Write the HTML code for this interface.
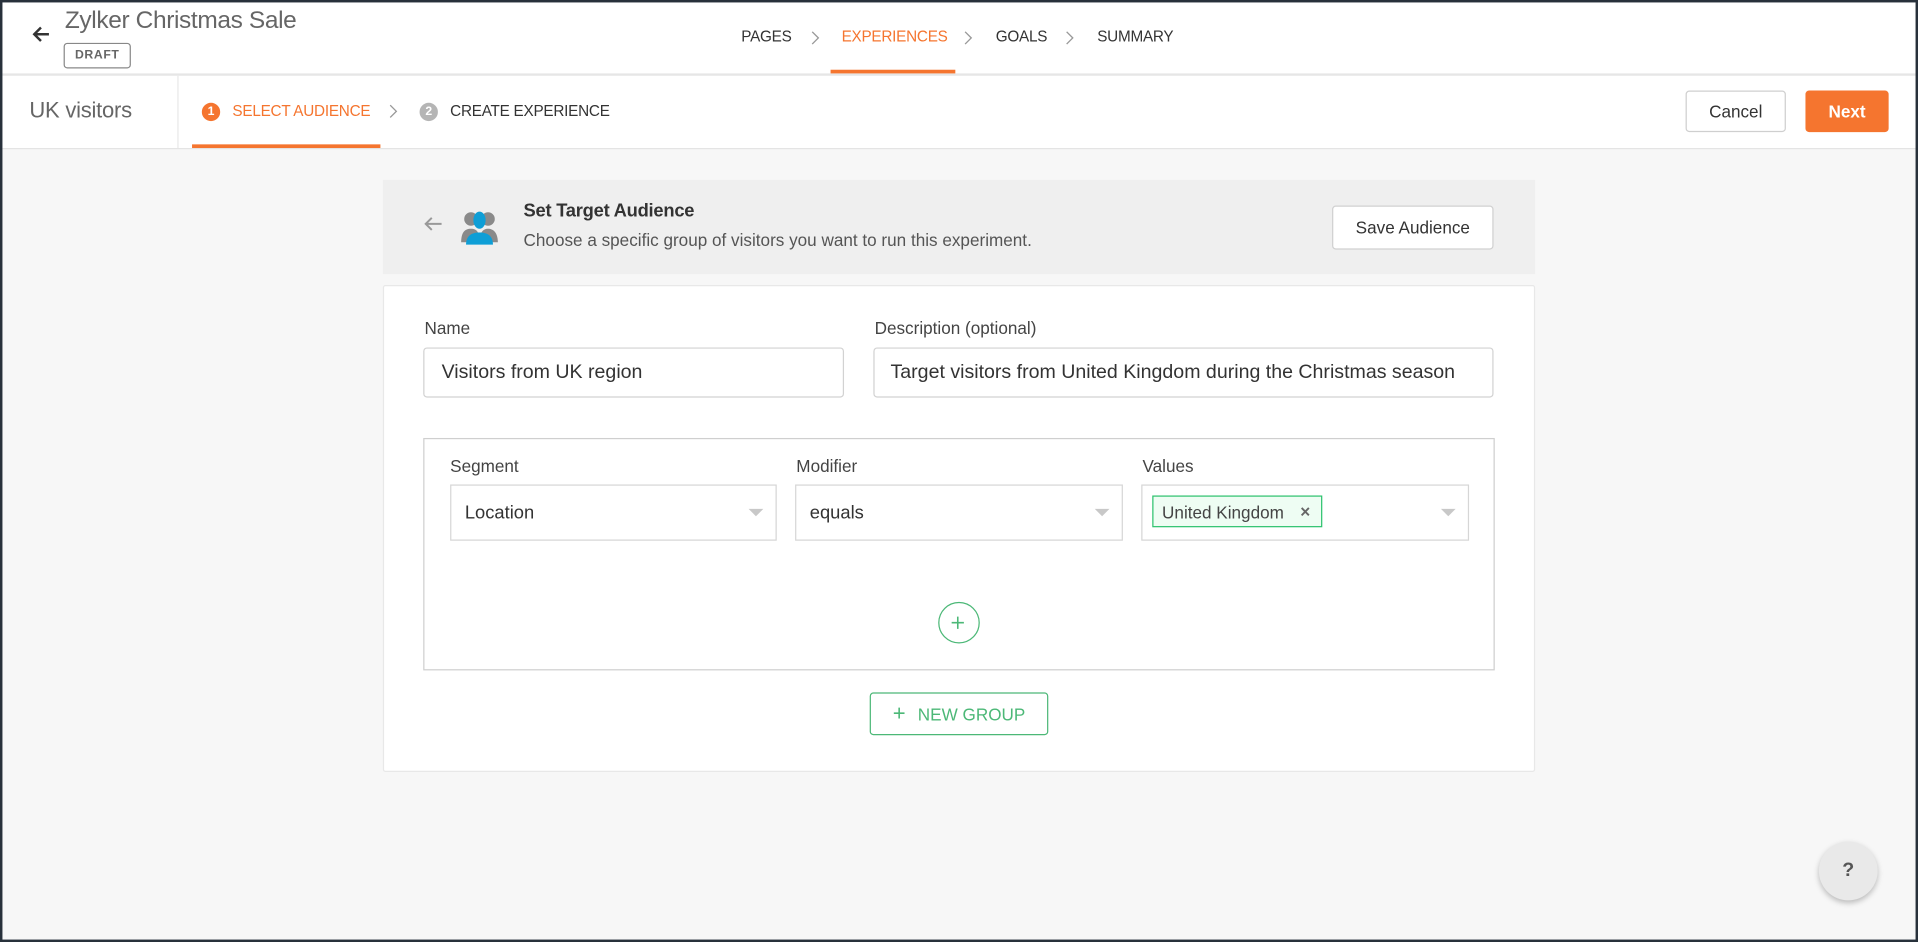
<!DOCTYPE html>
<html><head><meta charset="utf-8"><style>
html,body{margin:0;padding:0;width:1918px;height:942px;overflow:hidden;background:#28313b;}
#w{position:absolute;left:0;top:0;width:1568px;height:770px;transform:scale(1.22321,1.22338);transform-origin:0 0;font-family:"Liberation Sans",sans-serif;}
#pg{position:absolute;left:2px;top:2px;width:1564px;height:766px;background:#f7f7f7;overflow:hidden;}
.a{position:absolute;}
.t{position:absolute;white-space:nowrap;}
.btn{position:absolute;box-sizing:border-box;border-radius:3px;display:flex;align-items:center;justify-content:center;font-size:14px;}
.inp{position:absolute;box-sizing:border-box;border:1px solid #d2d2d2;border-radius:3px;background:#fff;}
.sel{position:absolute;box-sizing:border-box;border:1px solid #d6d6d6;background:#fff;height:46px;top:396px;}
.sel span{position:absolute;left:11px;top:14px;font-size:15px;color:#333;}
.car{position:absolute;right:10px;top:19px;width:0;height:0;border-left:6px solid transparent;border-right:6px solid transparent;border-top:6px solid #c8c8c8;}
.lbl{position:absolute;font-size:14px;color:#444;}
.nav{position:absolute;font-size:12.5px;white-space:nowrap;letter-spacing:-0.2px;}
</style></head><body><div id="w"><div id="pg">
<div class="a" style="left:0;top:0;width:1564px;height:58px;background:#fff;border-bottom:2px solid #e6e6e6;"></div>
<svg class="a" style="left:22px;top:16px" width="20" height="20" viewBox="0 0 20 20"><path d="M16 10H4M9.5 4.5L4 10l5.5 5.5" fill="none" stroke="#333" stroke-width="2"/></svg>
<div class="t" style="left:51px;top:4px;font-size:20px;color:#666;letter-spacing:-0.3px;">Zylker Christmas Sale</div>
<div class="a" style="left:50px;top:33px;width:53px;height:19px;border:1px solid #888;border-radius:3px;font-size:10px;font-weight:bold;color:#666;text-align:center;line-height:19px;letter-spacing:.5px;">DRAFT</div>
<div class="nav" style="left:604px;top:21px;color:#333;">PAGES</div>
<svg class="a" style="left:660px;top:23px" width="8" height="12" viewBox="0 0 8 12"><path d="M2 1l5 5-5 5" fill="none" stroke="#999" stroke-width="1.1"/></svg>
<div class="nav" style="left:686px;top:21px;color:#f5752f;">EXPERIENCES</div>
<div class="a" style="left:677px;top:55px;width:102px;height:3px;background:#f5752f;"></div>
<svg class="a" style="left:785px;top:23px" width="8" height="12" viewBox="0 0 8 12"><path d="M2 1l5 5-5 5" fill="none" stroke="#999" stroke-width="1.1"/></svg>
<div class="nav" style="left:812px;top:21px;color:#333;">GOALS</div>
<svg class="a" style="left:868px;top:23px" width="8" height="12" viewBox="0 0 8 12"><path d="M2 1l5 5-5 5" fill="none" stroke="#999" stroke-width="1.1"/></svg>
<div class="nav" style="left:895px;top:21px;color:#333;">SUMMARY</div>
<div class="a" style="left:0;top:60px;width:1564px;height:59px;background:#fff;border-bottom:1px solid #e4e4e4;"></div>
<div class="a" style="left:143px;top:60px;width:1px;height:59px;background:#e8e8e8;"></div>
<div class="t" style="left:22px;top:78px;font-size:18px;color:#666;letter-spacing:-0.2px;">UK visitors</div>
<div class="a" style="left:163px;top:82px;width:15px;height:15px;border-radius:50%;background:#f5752f;color:#fff;font-size:10px;font-weight:bold;text-align:center;line-height:15px;">1</div>
<div class="nav" style="left:188px;top:82px;color:#f5752f;">SELECT AUDIENCE</div>
<div class="a" style="left:155px;top:116px;width:154px;height:3px;background:#f5752f;"></div>
<svg class="a" style="left:315px;top:83px" width="8" height="12" viewBox="0 0 8 12"><path d="M2 1l5 5-5 5" fill="none" stroke="#999" stroke-width="1.1"/></svg>
<div class="a" style="left:341px;top:82px;width:15px;height:15px;border-radius:50%;background:#b5b5b5;color:#fff;font-size:10px;font-weight:bold;text-align:center;line-height:15px;">2</div>
<div class="nav" style="left:366px;top:82px;color:#333;">CREATE EXPERIENCE</div>
<div class="btn" style="left:1376px;top:72px;width:82px;height:34px;border:1px solid #cfcfcf;background:#fff;color:#333;">Cancel</div>
<div class="btn" style="left:1474px;top:72px;width:68px;height:34px;background:#f5752f;color:#fff;font-weight:bold;">Next</div>
<div class="a" style="left:311px;top:145px;width:942px;height:77px;background:#efefef;"></div>
<svg class="a" style="left:343px;top:173px" width="18" height="16" viewBox="0 0 18 16"><path d="M16 8H3M8 3L3 8l5 5" fill="none" stroke="#999" stroke-width="1.6"/></svg>
<svg class="a" style="left:372px;top:168px" width="36" height="32" viewBox="0 0 36 32"><circle cx="11" cy="9" r="5.5" fill="#8a8a8a"/><path d="M3 28c0-8 3-11 8-11s7 3 7 11z" fill="#8a8a8a"/><circle cx="25" cy="9" r="5.5" fill="#8a8a8a"/><path d="M18 28c0-8 3-11 7-11s8 3 8 11z" fill="#8a8a8a"/><ellipse cx="18" cy="10" rx="5" ry="7" fill="#0e9ed6"/><path d="M7 30c0-7 4-10 11-10s11 3 11 10z" fill="#0e9ed6"/></svg>
<div class="t" style="left:426px;top:162px;font-size:15px;color:#333;font-weight:bold;letter-spacing:-0.2px;">Set Target Audience</div>
<div class="t" style="left:426px;top:186px;font-size:14px;color:#555;">Choose a specific group of visitors you want to run this experiment.</div>
<div class="btn" style="left:1087px;top:166px;width:132px;height:36px;border:1px solid #d0d0d0;background:#fff;color:#333;">Save Audience</div>
<div class="a" style="left:311px;top:231px;width:940px;height:396px;background:#fff;border:1px solid #e8e8e8;border-radius:2px;"></div>
<div class="lbl" style="left:345px;top:258px;">Name</div>
<div class="inp" style="left:344px;top:282px;width:344px;height:41px;"><span class="t" style="left:14px;top:11px;font-size:16px;color:#333;">Visitors from UK region</span></div>
<div class="lbl" style="left:713px;top:258px;">Description (optional)</div>
<div class="inp" style="left:712px;top:282px;width:507px;height:41px;"><span class="t" style="left:13px;top:11px;font-size:16px;color:#333;">Target visitors from United Kingdom during the Christmas season</span></div>
<div class="a" style="left:344px;top:356px;width:874px;height:188px;border:1px solid #cfcfcf;"></div>
<div class="lbl" style="left:366px;top:371px;">Segment</div>
<div class="lbl" style="left:649px;top:371px;">Modifier</div>
<div class="lbl" style="left:932px;top:371px;">Values</div>
<div class="sel" style="left:366px;width:267px;top:394px;"><span>Location</span><div class="car"></div></div>
<div class="sel" style="left:648px;width:268px;top:394px;"><span>equals</span><div class="car"></div></div>
<div class="sel" style="left:931px;width:268px;top:394px;"><div class="car"></div></div>
<div class="a" style="left:940px;top:403px;width:139px;height:26px;border:1px solid #2ec26e;background:#eefdf3;box-sizing:border-box;"><span class="t" style="left:7px;top:5px;font-size:14px;color:#444;">United Kingdom</span><span class="t" style="left:120px;top:4px;font-size:14px;color:#666;font-weight:bold;">×</span></div>
<div class="a" style="left:765px;top:490px;width:32px;height:32px;border:1.5px solid #4cb877;border-radius:50%;"></div>
<svg class="a" style="left:774px;top:500px" width="14" height="14" viewBox="0 0 14 14"><path d="M7 2v10M2 7h10" stroke="#4cb877" stroke-width="1.3"/></svg>
<div class="btn" style="left:709px;top:564px;width:146px;height:35px;border:1.5px solid #4cb877;color:#4cb877;font-weight:500;"><span style="font-size:18px;margin-right:10px;font-weight:300;">+</span>NEW GROUP</div>
<div class="a" style="left:1485px;top:686px;width:48px;height:48px;border-radius:50%;background:#e9e9e9;box-shadow:0 2px 5px rgba(0,0,0,.25);text-align:center;line-height:48px;font-size:16px;font-weight:bold;color:#555;">?</div>
</div></div></body></html>
